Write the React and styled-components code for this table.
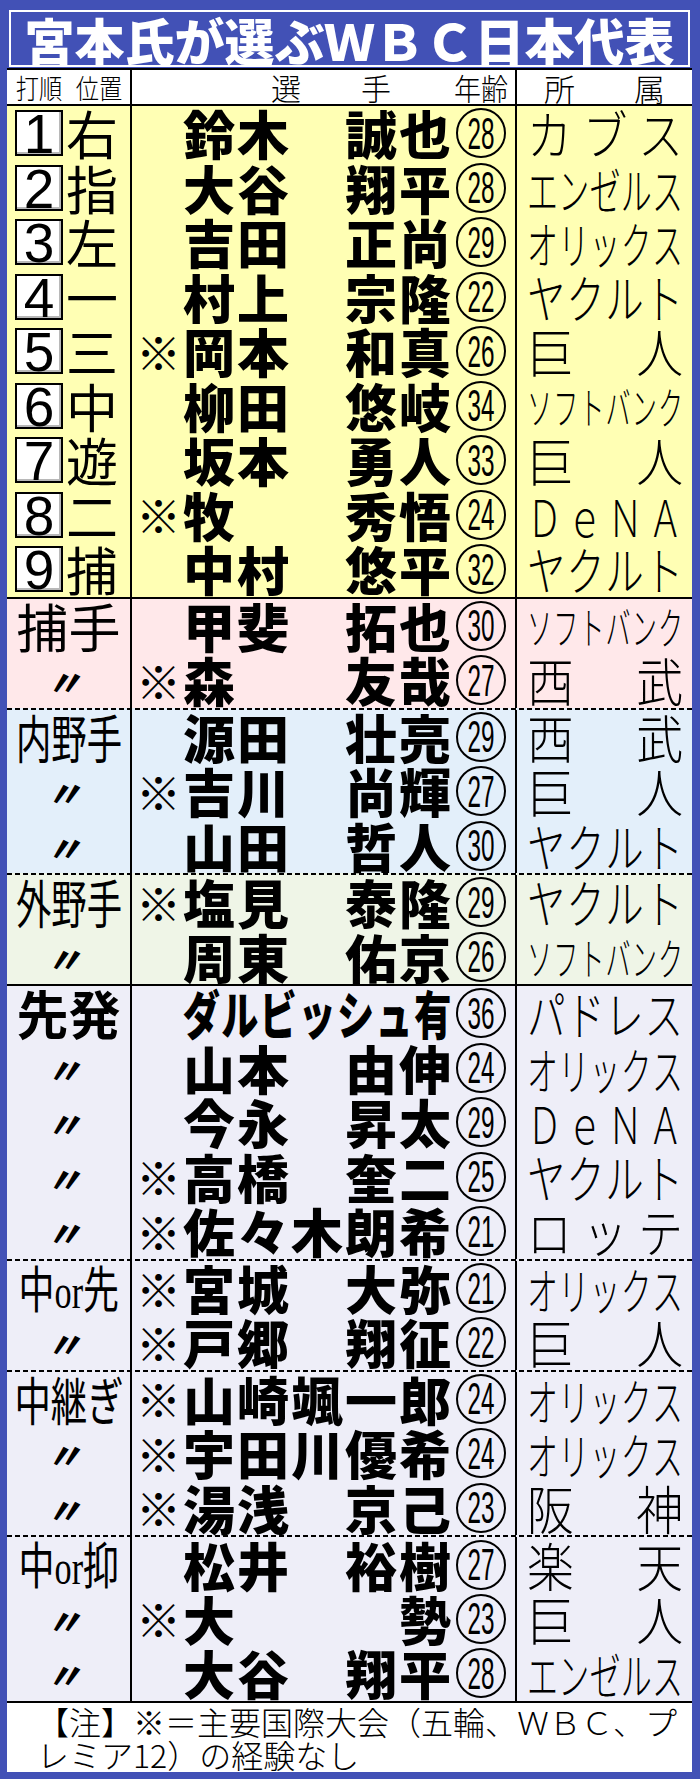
import React from 'react';
import styled, { createGlobalStyle } from 'styled-components';

const BLUE = '#4251b6';
const JP = '"Noto Sans CJK JP", "Noto Sans", sans-serif';
const ROW_H = 54.5;

const GlobalStyle = createGlobalStyle`
  html, body {
    margin: 0;
    padding: 0;
    background: #fff;
  }
  body {
    font-family: ${JP};
    color: #000;
  }
`;

const Frame = styled.div`
  width: 700px;
  height: 1779px;
  box-sizing: border-box;
  background: ${BLUE};
  padding: 10px 8px 7px 7px;
  display: flex;
  flex-direction: column;
`;

const Title = styled.h1`
  margin: 0 2px 1px;
  height: 57px;
  box-sizing: border-box;
  border: 2px solid #fff;
  display: flex;
  align-items: center;
  justify-content: center;
  color: #fff;
  font-family: ${JP};
  font-weight: 900;
  font-size: 50px;
  line-height: 1;
  white-space: nowrap;
`;

const Table = styled.div`
  flex: 1;
  display: flex;
  flex-direction: column;
  background: #fff;
  border-top: 2px solid #000;
`;

const Row = styled.div`
  display: grid;
  grid-template-columns: 123px 387px 1fr;
  height: ${(p) => p.$h}px;
`;

const HeaderRow = styled(Row)`
  background: #fff;
  border-bottom: 2px solid #000;
  font-weight: 300;
  line-height: 1;
  white-space: nowrap;
`;

const Cell = styled.div`
  display: flex;
  align-items: center;
  min-width: 0;
`;

const LabelCell = styled(Cell)`
  justify-content: ${(p) => (p.$center ? 'center' : 'flex-start')};
`;

const NameCell = styled(Cell)`
  border-left: 2px solid #000;
  border-right: 2px solid #000;
  padding: 0 7px 0 3px;
`;

const TeamCell = styled(Cell)`
  padding: 0 9px 0 10px;
`;

const HeadSplit = styled.div`
  flex: 1;
  display: flex;
  justify-content: space-between;
  padding: 0 4px 0 5px;
  font-size: 27px;
`;

const HeadPair = styled.span`
  transform: scaleX(0.86);
`;

const HeadPlayer = styled.span`
  margin-left: 136px;
  font-size: 30px;
  letter-spacing: 15px;
`;

const HeadAge = styled.span`
  margin-left: auto;
  font-size: 30px;
  transform: scaleX(0.9);
  transform-origin: right center;
`;

const HeadTeam = styled.span`
  margin-left: 27px;
  font-size: 31px;
  letter-spacing: 14px;
`;

const RULES = {
  none: 'none',
  dashed: 'repeating-linear-gradient(to right, #000 0 5px, transparent 5px 8px)',
  solid: 'linear-gradient(#000, #000)',
};

const Section = styled.div`
  padding-top: ${(p) => (p.$rule === 'none' ? 0 : 2)}px;
  background-color: ${(p) => p.$bg};
  background-image: ${(p) => RULES[p.$rule]};
  background-size: 100% 2px;
  background-repeat: no-repeat;
  background-position: top left;
`;

const NumberBox = styled.span`
  margin-left: 8px;
  width: 48px;
  height: 46px;
  box-sizing: border-box;
  border: 2px solid #000;
  background: #fff;
  box-shadow: inset -2px -2px 0 #b8b8b8;
  display: flex;
  align-items: center;
  justify-content: center;
  font-family: "Liberation Sans", Arial, sans-serif;
  font-size: 55px;
  line-height: 1;
  padding-top: 3px;
`;

const Position = styled.span`
  margin-left: 3px;
  font-size: 52px;
  font-weight: 400;
  line-height: 1;
`;

const Label = styled.span`
  flex-shrink: 0;
  white-space: nowrap;
  font-size: ${(p) => p.$size || 52}px;
  font-weight: ${(p) => (p.$bold ? 700 : 400)};
  line-height: 1;
  transform: scaleX(${(p) => p.$sx || 1});
  transform-origin: center;
`;

const Latin = styled.span`
  font-family: "Liberation Serif", serif;
  font-size: 0.95em;
`;

const Ditto = styled.span`
  font-size: 36px;
  font-weight: 900;
  line-height: 1;
  transform: skewX(-12deg);
`;

const Mark = styled.span`
  width: 47px;
  flex-shrink: 0;
  text-align: center;
  font-size: 45px;
  font-weight: 300;
  line-height: 1;
`;

const NameBox = styled.span`
  flex-shrink: 0;
  width: ${(p) => 270 / p.$sx}px;
  margin-right: ${(p) => 270 - 270 / p.$sx}px;
  display: flex;
  justify-content: space-between;
  transform: scaleX(${(p) => p.$sx});
  transform-origin: left center;
  font-size: 52px;
  font-weight: 900;
  line-height: 1;
`;

const Glyph = styled.span`
  display: inline-block;
  width: 54px;
  text-align: center;
`;

const AgeCircle = styled.span`
  margin-left: 4px;
  width: 50px;
  height: 50px;
  flex-shrink: 0;
  box-sizing: border-box;
  border: 2px solid #000;
  border-radius: 50%;
  display: flex;
  align-items: center;
  justify-content: center;
  overflow: hidden;
`;

const AgeDigits = styled.span`
  font-family: "Liberation Sans", Arial, sans-serif;
  font-size: 45px;
  line-height: 1;
  transform: scaleX(0.54);
`;

const TeamText = styled.span`
  flex-shrink: 0;
  width: ${(p) => 156 / p.$sx}px;
  display: flex;
  justify-content: space-between;
  transform: scaleX(${(p) => p.$sx});
  transform-origin: left center;
  font-size: ${(p) => p.$size}px;
  font-weight: 300;
  line-height: 1;
`;

const Note = styled.div`
  flex-shrink: 0;
  height: 68px;
  box-sizing: border-box;
  border-top: 2px solid #000;
  background: #fff;
  padding: 2px 6px 0 30px;
  font-size: 32px;
  font-weight: 300;
  line-height: 33px;
  white-space: nowrap;
`;

const teamLook = (team) => {
  const n = team.length;
  if (team === 'ＤｅＮＡ') return { sx: 0.7, size: 50 };
  if (n <= 2) return { sx: 0.9, size: 52 };
  if (n === 3) return { sx: 0.86, size: 52 };
  if (n === 4) return { sx: 0.74, size: 52 };
  if (n === 5) return { sx: 0.62, size: 50 };
  return { sx: 0.57, size: 44 };
};

const p = (mark, sei, mei, age, team) => ({ mark, sei, mei, age, team });

const starters = [
  { no: 1, pos: '右', ...p(false, '鈴木', '誠也', 28, 'カブス') },
  { no: 2, pos: '指', ...p(false, '大谷', '翔平', 28, 'エンゼルス') },
  { no: 3, pos: '左', ...p(false, '吉田', '正尚', 29, 'オリックス') },
  { no: 4, pos: '一', ...p(false, '村上', '宗隆', 22, 'ヤクルト') },
  { no: 5, pos: '三', ...p(true, '岡本', '和真', 26, '巨人') },
  { no: 6, pos: '中', ...p(false, '柳田', '悠岐', 34, 'ソフトバンク') },
  { no: 7, pos: '遊', ...p(false, '坂本', '勇人', 33, '巨人') },
  { no: 8, pos: '二', ...p(true, '牧', '秀悟', 24, 'ＤｅＮＡ') },
  { no: 9, pos: '捕', ...p(false, '中村', '悠平', 32, 'ヤクルト') },
];

const groups = [
  {
    key: 'catcher',
    label: '捕手',
    bg: '#ffe8ea',
    rule: 'solid',
    rows: [p(false, '甲斐', '拓也', 30, 'ソフトバンク'), p(true, '森', '友哉', 27, '西武')],
  },
  {
    key: 'infield',
    label: '内野手',
    sx: 0.68,
    bg: '#e3effa',
    rule: 'dashed',
    rows: [
      p(false, '源田', '壮亮', 29, '西武'),
      p(true, '吉川', '尚輝', 27, '巨人'),
      p(false, '山田', '哲人', 30, 'ヤクルト'),
    ],
  },
  {
    key: 'outfield',
    label: '外野手',
    sx: 0.68,
    bg: '#eff5e7',
    rule: 'dashed',
    rows: [p(true, '塩見', '泰隆', 29, 'ヤクルト'), p(false, '周東', '佑京', 26, 'ソフトバンク')],
  },
  {
    key: 'sp',
    label: '先発',
    bold: true,
    bg: '#eeeef8',
    rule: 'solid',
    rows: [
      p(false, 'ダルビッシュ', '有', 36, 'パドレス'),
      p(false, '山本', '由伸', 24, 'オリックス'),
      p(false, '今永', '昇太', 29, 'ＤｅＮＡ'),
      p(true, '高橋', '奎二', 25, 'ヤクルト'),
      p(true, '佐々木', '朗希', 21, 'ロッテ'),
    ],
  },
  {
    key: 'mid-sp',
    label: ['中', 'or', '先'],
    sx: 0.72,
    bg: '#eeeef8',
    rule: 'dashed',
    rows: [p(true, '宮城', '大弥', 21, 'オリックス'), p(true, '戸郷', '翔征', 22, '巨人')],
  },
  {
    key: 'rp',
    label: '中継ぎ',
    sx: 0.7,
    bg: '#eeeef8',
    rule: 'dashed',
    rows: [
      p(true, '山崎', '颯一郎', 24, 'オリックス'),
      p(true, '宇田川', '優希', 24, 'オリックス'),
      p(true, '湯浅', '京己', 23, '阪神'),
    ],
  },
  {
    key: 'mid-cl',
    label: ['中', 'or', '抑'],
    sx: 0.72,
    bg: '#eeeef8',
    rule: 'dashed',
    rows: [
      p(false, '松井', '裕樹', 27, '楽天'),
      p(true, '大', '勢', 23, '巨人'),
      p(false, '大谷', '翔平', 28, 'エンゼルス'),
    ],
  },
];

const Glyphs = ({ text }) => (
  <span>
    {text.split('').map((c, i) => (
      <Glyph key={i}>{c}</Glyph>
    ))}
  </span>
);

const PlayerCells = ({ row }) => {
  const total = row.sei.length + row.mei.length;
  const sx = total > 5 ? 270 / (total * 54) : 1;
  const look = teamLook(row.team);
  return (
    <>
      <NameCell>
        <Mark>{row.mark ? '※' : ''}</Mark>
        <NameBox $sx={sx}>
          <Glyphs text={row.sei} />
          <Glyphs text={row.mei} />
        </NameBox>
        <AgeCircle>
          <AgeDigits>{row.age}</AgeDigits>
        </AgeCircle>
      </NameCell>
      <TeamCell>
        <TeamText $sx={look.sx} $size={look.size}>
          {row.team.split('').map((c, i) => (
            <span key={i}>{c}</span>
          ))}
        </TeamText>
      </TeamCell>
    </>
  );
};

const GroupLabel = ({ group }) => {
  if (Array.isArray(group.label)) {
    return (
      <Label $sx={group.sx} $size={50}>
        {group.label[0]}
        <Latin>{group.label[1]}</Latin>
        {group.label[2]}
      </Label>
    );
  }
  return (
    <Label $sx={group.sx} $bold={group.bold}>
      {group.label}
    </Label>
  );
};

export default function App() {
  return (
    <>
      <GlobalStyle />
      <Frame>
        <Title>宮本氏が選ぶＷＢＣ日本代表</Title>
        <Table>
          <HeaderRow $h={34}>
            <Cell>
              <HeadSplit>
                <HeadPair>打順</HeadPair>
                <HeadPair>位置</HeadPair>
              </HeadSplit>
            </Cell>
            <NameCell>
              <HeadPlayer>選　手</HeadPlayer>
              <HeadAge>年齢</HeadAge>
            </NameCell>
            <Cell>
              <HeadTeam>所　属</HeadTeam>
            </Cell>
          </HeaderRow>

          <Section $bg="#ffffb4" $rule="none">
            {starters.map((row) => (
              <Row key={row.no} $h={ROW_H}>
                <LabelCell>
                  <NumberBox>{row.no}</NumberBox>
                  <Position>{row.pos}</Position>
                </LabelCell>
                <PlayerCells row={row} />
              </Row>
            ))}
          </Section>

          {groups.map((group) => (
            <Section key={group.key} $bg={group.bg} $rule={group.rule}>
              {group.rows.map((row, i) => (
                <Row key={i} $h={ROW_H}>
                  <LabelCell $center>
                    {i === 0 ? <GroupLabel group={group} /> : <Ditto>〃</Ditto>}
                  </LabelCell>
                  <PlayerCells row={row} />
                </Row>
              ))}
            </Section>
          ))}

          <Note>
            【注】※＝主要国際大会（五輪、ＷＢＣ、プ
            <br />
            レミア12）の経験なし
          </Note>
        </Table>
      </Frame>
    </>
  );
}
